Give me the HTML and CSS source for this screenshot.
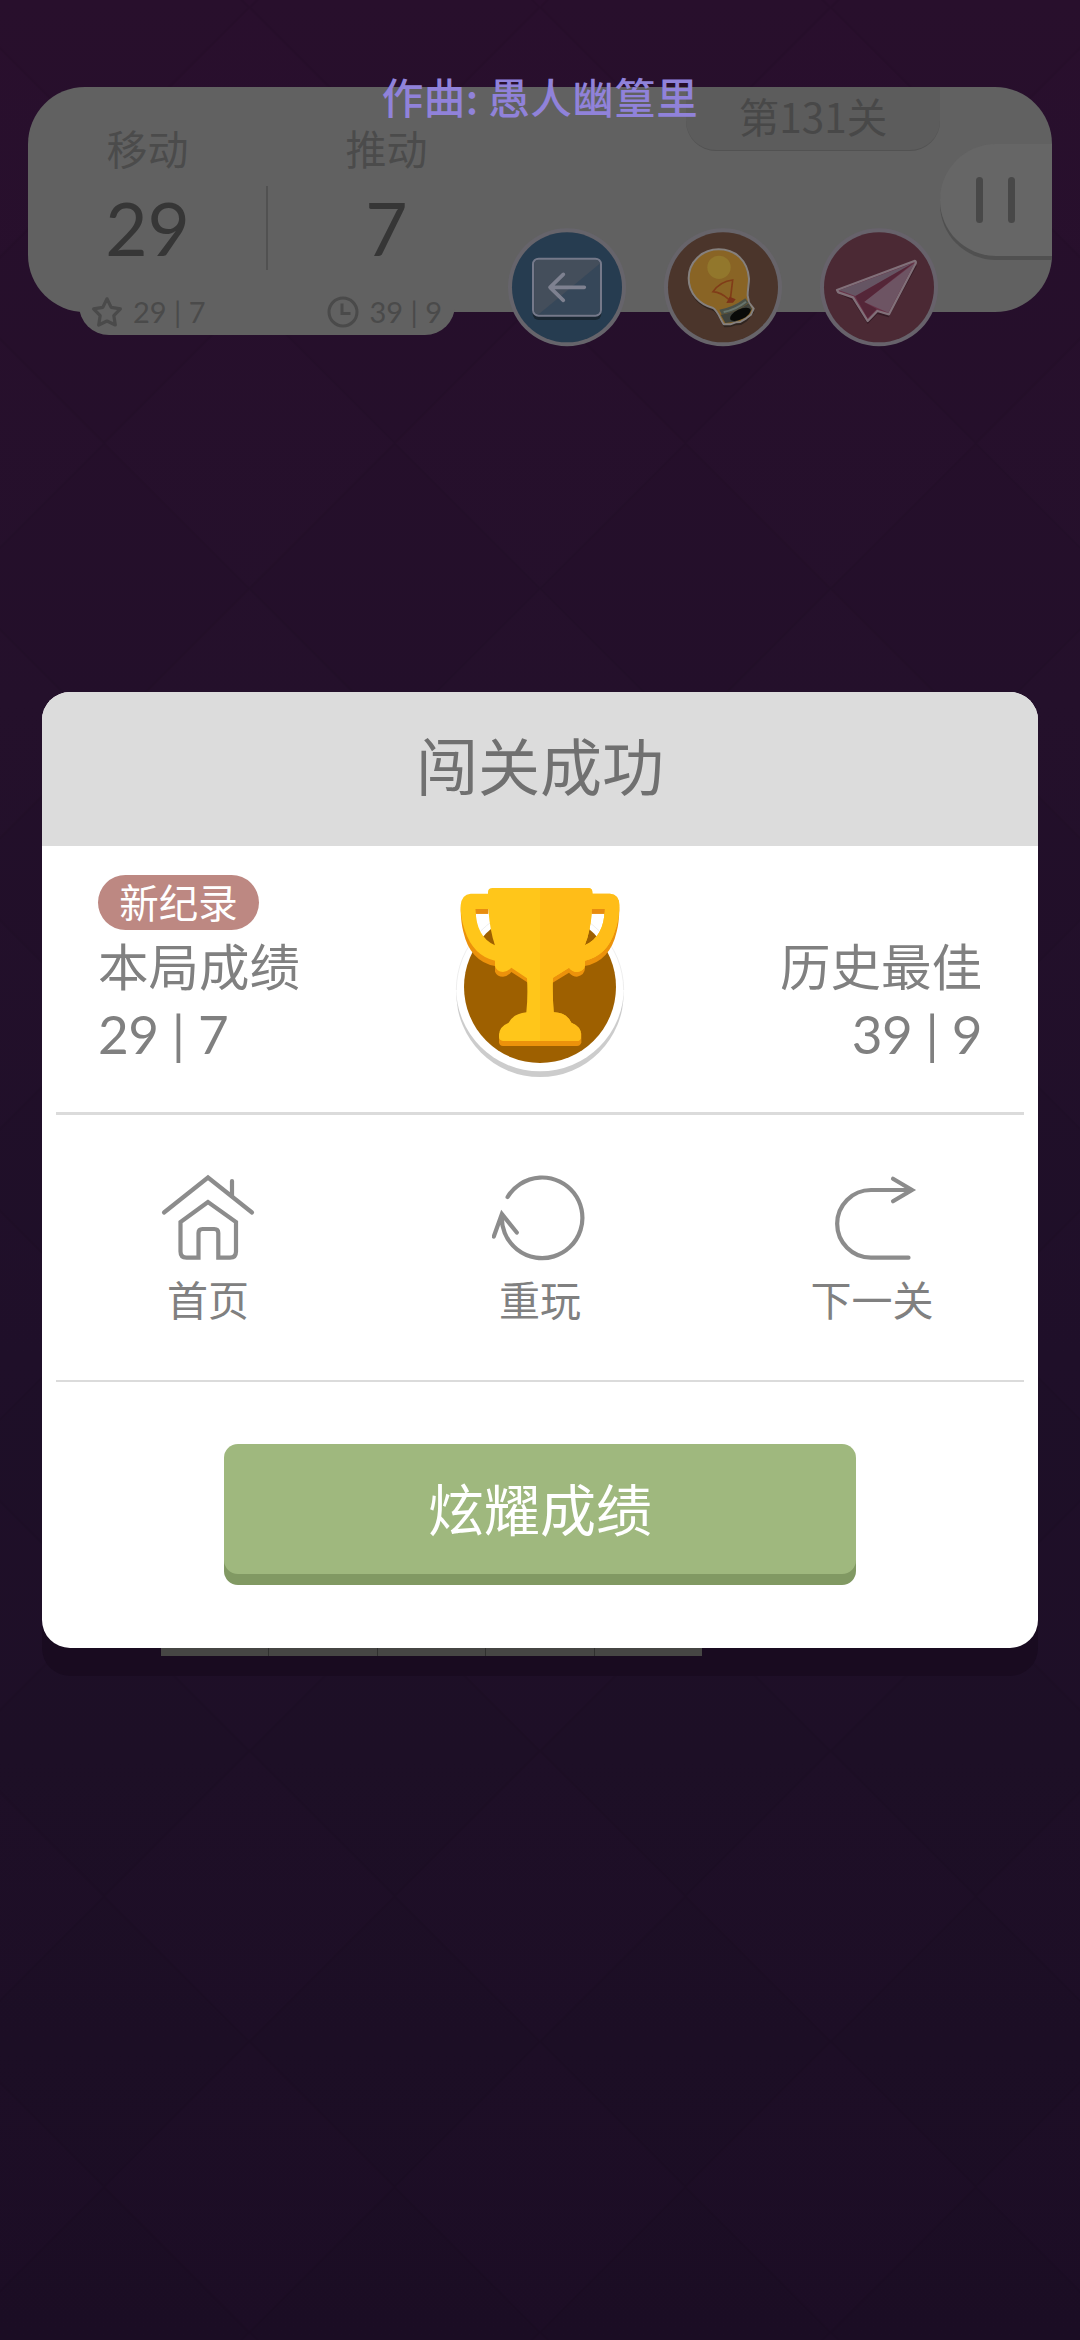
FILE: index.html
```html
<!DOCTYPE html>
<html lang="zh-CN">
<head>
<meta charset="utf-8">
<title>闯关成功</title>
<link rel="stylesheet" href="styles.css">
</head>
<body>
<div class="screen">
  <svg class="backdrop" width="1080" height="2340" aria-hidden="true">
    <defs>
      <pattern id="diamonds" x="249.4" y="1896.3" width="290.6" height="290.6" patternUnits="userSpaceOnUse">
        <path d="M145.3 0L290.6 145.3L145.3 290.6L0 145.3Z" fill="#000" fill-opacity=".03"/>
        <path d="M145.3 0L290.6 145.3L145.3 290.6L0 145.3Z" fill="none" stroke="#000" stroke-opacity=".05" stroke-width="2"/>
      </pattern>
    </defs>
    <rect width="1080" height="2340" fill="url(#diamonds)"/>
  </svg>

  <header class="hud">
    <div class="counters">
      <div class="counter"><span class="counter-label">移动</span><span class="counter-value">29</span></div>
      <div class="counter"><span class="counter-label">推动</span><span class="counter-value">7</span></div>
    </div>
    <div class="records">
      <div class="record">
        <svg width="32" height="32" viewBox="0 0 32 32"><path d="M16 2.800L20.200 11.400L29.400 12.800L22.800 19.600L24.300 29L16 25L7.700 29L9.200 19.600L2.600 12.800L11.800 11.400Z" fill="none" stroke="#4a4a4a" stroke-width="3.200" stroke-linejoin="round"/></svg>
        <span>29 | 7</span>
      </div>
      <div class="record">
        <svg width="32" height="32" viewBox="0 0 32 32"><circle cx="16" cy="16" r="14" fill="none" stroke="#4a4a4a" stroke-width="3"/><path d="M15 7.500V17.500H23.500" fill="none" stroke="#4a4a4a" stroke-width="3"/></svg>
        <span>39 | 9</span>
      </div>
    </div>
    <div class="level">第131关</div>
    <div class="pause"><i></i><i></i></div>
    <div class="tools">
      <svg width="120" height="120" viewBox="20 35 360 360">
        <circle cx="200" cy="216" r="177" fill="#66646b"/>
        <circle cx="200" cy="216" r="165" fill="#263c50"/>
        <rect x="97" y="138" width="206" height="176" rx="18" fill="#1a2732"/>
        <rect x="98" y="130" width="204" height="171" rx="17" fill="#3b4857" stroke="#75798a" stroke-width="6"/>
        <path d="M102 284Q102 297 115 297H130L298 160V146Q298 134 286 134H114Q102 134 102 146Z" fill="#444e5b"/>
        <path d="M298 145L115 297H286Q298 297 298 285Z" fill="#364759"/>
        <path d="M252 216H149M189 177L149 216L189 255" fill="none" stroke="#7e8190" stroke-width="11" stroke-linecap="round" stroke-linejoin="round"/>
      </svg>
      <svg width="120" height="120" viewBox="488 35 360 360">
        <circle cx="668" cy="216" r="177" fill="#67646a"/>
        <circle cx="668" cy="216" r="165" fill="#4b352b"/>
        <path d="M655 110C605 110 564 148 564 195C564 240 598 276 638 286C652 294 660 318 672 336L690 335L706 330L722 329L740 318L762 290L745 252C744 238 748 225 748 204C748 150 705 110 655 110Z" fill="#2f241f"/>
        <path d="M655 102C605 102 565 140 565 189C565 235 598 268 638 278C652 286 658 308 670 327L690 327L706 321L720 320L738 309L752 298L760 280L746 262L742 240C742 220 746 208 746 190C742 135 705 102 655 102Z" fill="#896425" stroke="#85807e" stroke-width="6" stroke-linejoin="round"/>
        <circle cx="656" cy="156" r="35" fill="#92772c"/>
        <path d="M690 252L697 194Q660 198 638 229Q662 231 685 252" fill="none" stroke="#803c18" stroke-width="5"/>
        <path d="M678 263L688 244L706 252L698 262Z" fill="#7c3219"/>
        <path d="M657 283Q695 278 735 249L745 262Q710 291 664 297Z" fill="#4b5148"/>
        <path d="M661 298Q704 294 745 264L755 281L735 306L704 319L675 323Z" fill="#3f423c"/>
        <path d="M670 290Q708 282 737 259" fill="none" stroke="#69756c" stroke-width="6"/>
        <ellipse cx="720" cy="297" rx="34" ry="15" transform="rotate(-26 720 297)" fill="#090a08"/>
      </svg>
      <svg width="120" height="120" viewBox="957 35 360 360">
        <circle cx="1137" cy="216" r="177" fill="#67626b"/>
        <circle cx="1137" cy="216" r="165" fill="#4b2934"/>
        <path d="M1011 233L1246 146L1250 152L1166 306L1132 296L1103 326L1058 255Z" fill="#351b25"/>
        <path d="M1011 224L1243 137Q1249 137 1247 144L1167 297L1132 287L1103 317L1059 246L1015 231Z" fill="#693348" stroke="#817079" stroke-width="7" stroke-linejoin="round"/>
        <path d="M1018 225L1240 143L1066 242Z" fill="#655563"/>
        <path d="M1244 143L1092 260L1165 292Z" fill="#6d5463"/>
        <path d="M1066 243L1240 143L1092 260L1130 281L1103 309Z" fill="#542638"/>
      </svg>
    </div>
    <p class="lyric">作曲: 愚人幽篁里</p>
  </header>

  <div class="board"><i></i><i></i><i></i><i></i><i></i></div>

  <main class="dialog">
    <h1 class="dialog-title">闯关成功</h1>
    <section class="scores">
      <div class="score">
        <span class="badge">新纪录</span>
        <span class="score-label">本局成绩</span>
        <span class="score-value">29 | 7</span>
      </div>
      <svg class="trophy" width="220" height="230" viewBox="0 0 660 690">
        <circle cx="330" cy="400" r="251" fill="#ccc"/>
        <circle cx="330" cy="382" r="252" fill="#fff"/>
        <path d="M79 390A251 251 0 0 1 581 390" fill="none" stroke="#ddd" stroke-width="1.500"/>
        <circle cx="330" cy="381" r="228" fill="#9e6000"/>
        <g id="cup">
          <path d="M92 150Q92 114 122 114H174V161H137Q137 240 195 268V318Q120 304 100 215Q93 190 92 150ZM568 150Q568 114 540 114H486V161H524Q524 240 464 268V318Q540 304 560 215Q567 190 568 150Z" fill="#ec920b"/>
          <path d="M174 100L195 258V335Q201 350 219 350Q234 348 244 336L294 368H368L417 338Q428 350 441 350Q464 346 465 325V258L487 100Z" fill="#ec920b"/>
          <path d="M207 520V547Q208 558 219 558H441Q452 558 454 547V520Z" fill="#ec920b"/>
          <path fill-rule="evenodd" d="M122 101H174V96Q174 84 188 84H474Q487 84 487 96V101H540Q568 103 568 136Q568 180 554 215Q532 285 465 302V316Q462 334 441 336Q428 336 417 323L369 353Q366 378 371 457Q410 458 424 488Q454 500 453 525V532Q452 543 441 543H219Q208 542 207 532V525Q207 500 236 488Q250 461 289 457Q294 410 291 355L244 323Q234 335 219 336Q199 335 195 318V302Q130 288 104 210Q91 170 92 136Q95 103 122 101ZM137 147Q137 230 195 256Q180 215 175 147ZM486 147Q482 215 464 256Q523 230 524 147Z" fill="#ffc61a"/>
          <path d="M330 84H474Q487 84 487 96V101H540Q568 103 568 136Q568 180 554 215Q532 285 465 302V316Q462 334 441 336Q428 336 417 323L369 353Q366 378 371 457Q410 458 424 488Q454 500 453 525V532Q452 543 441 543H330ZM486 147Q482 215 464 256Q523 230 524 147Z" fill-rule="evenodd" fill="#ffbd18"/>
          <path d="M137 147H175V161H138ZM486 147H524L523 161H485Z" fill="#e88c10"/>
        </g>
      </svg>
      <div class="score score-best">
        <span class="score-label">历史最佳</span>
        <span class="score-value">39 | 9</span>
      </div>
    </section>
    <nav class="actions">
      <a class="action">
        <svg width="96" height="90" viewBox="160 1172 96 90"><path d="M164 1212.500L208 1177.500L252 1212.500M232 1181V1196M208 1202L180.500 1222V1251.500Q180.500 1257.700 186.500 1257.700H198.500V1233Q198.500 1229 202.500 1229H214.300Q218.300 1229 218.300 1233V1257.700H230Q236 1257.700 236 1251.500V1222Z"/></svg>
        <span>首页</span>
      </a>
      <a class="action">
        <svg width="96" height="90" viewBox="492 1172 96 90"><path d="M507.600 1197A40.300 40.300 0 1 1 501.900 1215M493.800 1236.500L501.900 1214L516.800 1232.500"/></svg>
        <span>重玩</span>
      </a>
      <a class="action">
        <svg width="96" height="90" viewBox="824 1172 96 90"><path d="M912 1190H871A33.850 33.850 0 0 0 871 1257.700H908.500M893 1178.700L912 1190L893 1201.300"/></svg>
        <span>下一关</span>
      </a>
    </nav>
    <div class="share-row"><button class="share">炫耀成绩</button></div>
  </main>
</div>
</body>
</html>
```
FILE: styles.css
```css
* { box-sizing: border-box; }

body {
  margin: 0;
  font-family: "Noto Sans CJK SC", sans-serif;
  color: #808080;
}

.screen {
  position: relative;
  width: 1080px;
  height: 2340px;
  padding-top: 87px;
  overflow: hidden;
  background: linear-gradient(#290f2d, #24102b 30%, #1f0f29 58%, #1e0f27 75%, #1c0d25);
}

.backdrop { position: absolute; left: 0; top: 0; }

/* top status panel */
.hud {
  position: relative;
  width: 1024px;
  height: 225px;
  margin: 0 28px;
  border-radius: 57px;
  background: #616161;
}

.counters {
  display: flex;
  width: 478px;
  height: 210px;
}

.counter {
  flex: 1;
  display: flex;
  flex-direction: column;
  align-items: center;
  padding-top: 30px;
  position: relative;
}

.counter + .counter::before {
  content: "";
  position: absolute;
  left: -1px;
  top: 99px;
  width: 2px;
  height: 84px;
  background: #515151;
}

.counter-label { font-size: 41px; line-height: 60px; color: #4b4b4b; }

.counter-value {
  font-family: Lato, sans-serif;
  font-size: 73px;
  line-height: 102px;
  color: #363636;
}

/* best-result strip hanging below the panel */
.records {
  display: flex;
  justify-content: space-between;
  align-items: flex-end;
  width: 376px;
  height: 76px;
  margin: -38px 0 0 51px;
  padding: 0 13px 7px 12px;
  border-radius: 0 0 30px 30px;
  background: #616161;
}

.record {
  display: flex;
  align-items: center;
  gap: 10px;
  font: 29px/32px Lato, sans-serif;
  color: #4a4a4a;
}

.level {
  position: absolute;
  left: 658px;
  top: 0;
  width: 254px;
  height: 64px;
  border-bottom: 1px solid #525252;
  border-radius: 0 0 30px 30px;
  background: #5c5c5c;
  font-size: 40.500px;
  line-height: 58px;
  text-align: center;
  color: #484848;
}

.pause {
  position: absolute;
  right: 0;
  top: 57px;
  display: flex;
  gap: 25px;
  width: 112px;
  height: 112px;
  padding: 33px 0 0 36px;
  border-radius: 56px 0 0 56px;
  background: #666;
  box-shadow: 0 4px #505050;
}

.pause i { width: 7px; height: 46px; border-radius: 4px; background: #484848; }

.tools {
  position: absolute;
  left: 479px;
  top: 140px;
  display: flex;
  gap: 36px;
}

.lyric {
  position: absolute;
  left: 0;
  right: 0;
  top: -21px;
  margin: 0;
  font-size: 41.500px;
  font-weight: 500;
  line-height: 60px;
  letter-spacing: .5px;
  text-align: center;
  color: #9082da;
}

/* last row of the puzzle board, visible below the dialog */
.board {
  display: flex;
  width: 541px;
  height: 16px;
  margin: 1328px 0 0 161px;
  position: relative;
  z-index: 2;
}

.board i { flex: 1; border-right: 1px solid #30302f; background: #464644; }
.board i:last-child { border-right: 0; }

/* result dialog */
.dialog {
  position: absolute;
  z-index: 3;
  left: 42px;
  top: 692px;
  width: 996px;
  height: 956px;
  border-radius: 28px;
  background: #fff;
}

.screen::after {
  content: "";
  position: absolute;
  z-index: 1;
  left: 42px;
  top: 1560px;
  width: 996px;
  height: 116px;
  border-radius: 28px;
  background: #190b20;
}

.dialog-title {
  height: 154px;
  margin: 0;
  border-radius: 28px 28px 0 0;
  background: #dcdcdc;
  font-size: 62px;
  font-weight: 400;
  line-height: 145px;
  text-align: center;
  color: #707070;
}

.scores {
  display: grid;
  grid-template-columns: 1fr 220px 1fr;
  height: 269px;
  margin: 0 14px;
  padding: 0 42px;
  border-bottom: 3px solid #dbdbdb;
}

.score {
  display: flex;
  flex-direction: column;
  align-items: flex-start;
  padding-top: 29px;
}

.score-best { align-items: flex-end; padding-top: 84px; }

.badge {
  width: 161px;
  height: 55px;
  border-radius: 28px;
  background: #bd8882;
  font-size: 39.500px;
  line-height: 51px;
  text-align: center;
  color: #fff;
}

.score-label { font-size: 50.500px; line-height: 68px; }
.score-value { padding-top: 6px; font: 53px/60px Lato, sans-serif; letter-spacing: -.4px; }

.trophy { margin-top: 14px; }

.actions {
  display: grid;
  grid-template-columns: repeat(3, 332px);
  justify-content: center;
  height: 267px;
  margin: 0 14px;
  border-bottom: 2px solid #dbdbdb;
}

.action {
  display: flex;
  flex-direction: column;
  align-items: center;
  padding-top: 57px;
  font-size: 41px;
  line-height: 60px;
}

.action svg { fill: none; stroke: #8c8c8c; stroke-width: 4.200; stroke-linecap: round; }
.action span { margin-top: 6px; }

.share-row { display: flex; justify-content: center; padding-top: 62px; }

.share {
  width: 632px;
  height: 130px;
  padding: 0 0 4px;
  border: 0;
  border-radius: 14px;
  background: #9fb87e;
  box-shadow: 0 11px #819963;
  font: 56px/126px "Noto Sans CJK SC", sans-serif;
  color: #fff;
}
```
